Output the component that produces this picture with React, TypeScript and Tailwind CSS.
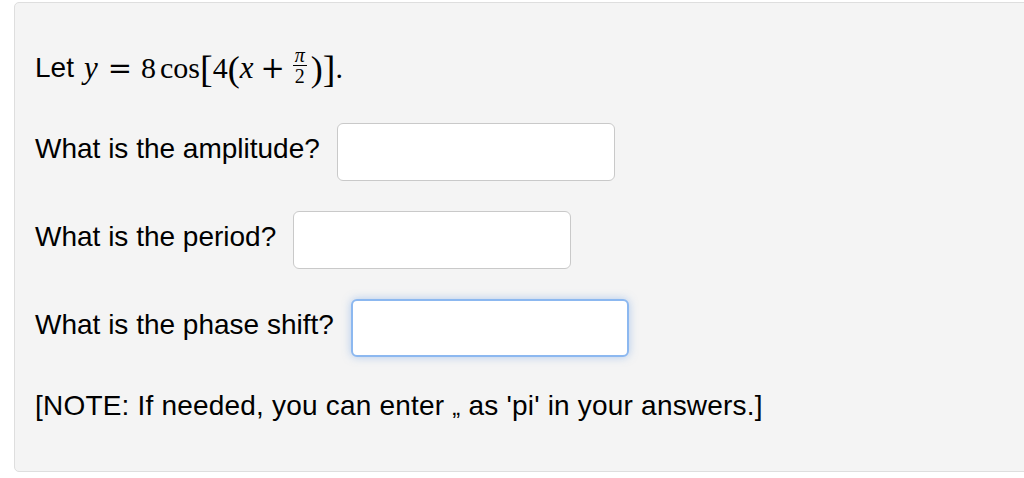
const sans = { fontFamily: '"Liberation Sans", Arial, sans-serif' };

const Field = ({ focused = false }: { focused?: boolean }) => (
  <input
    type="text"
    className={
      focused
        ? "w-[278px] h-[58px] bg-white rounded-[6px] border-2 border-[#8cb8f0] shadow-[0_0_8px_rgba(110,160,230,0.5)] outline-none"
        : "w-[278px] h-[58px] bg-white rounded-[6px] border border-[#c9c9c9] outline-none"
    }
  />
);

const Question = ({ label, focused }: { label: string; focused?: boolean }) => (
  <div className="flex items-center gap-[17px] h-[58px]">
    <span className="text-[28px] leading-[32px] text-black mb-[6px]">{label}</span>
    <Field focused={focused} />
  </div>
);

const MathLine = () => (
  <span
    className="inline-flex items-baseline text-[30px] leading-[32px] text-black"
    style={{ fontFamily: '"Liberation Serif", "Times New Roman", serif' }}
  >
    <span className="italic ml-[10px] text-[31px]">y</span>
    <span className="ml-[10px] mr-[9px] text-[29px]" style={{ fontFamily: '"DejaVu Serif", serif' }}>=</span>
    <span>8</span>
    <span className="ml-[4px]">cos</span>
    <span className="text-[38px] leading-[32px] relative top-[4px]">[</span>
    <span>4</span>
    <span className="text-[36px] leading-[32px] relative top-[3px]">(</span>
    <span className="italic text-[31px]">x</span>
    <span className="ml-[7px] mr-[8px] text-[29px]" style={{ fontFamily: '"DejaVu Serif", serif' }}>+</span>
    <span className="inline-flex flex-col items-center text-[20px] relative top-[-2px] self-center">
      <span className="italic leading-[17px] border-b border-black px-[2px] pb-[1px]">π</span>
      <span className="leading-[17px] pt-[2px]">2</span>
    </span>
    <span className="ml-[4px] text-[36px] leading-[32px] relative top-[3px]">)</span>
    <span className="text-[38px] leading-[32px] relative top-[4px]">]</span>
    <span>.</span>
  </span>
);

export default function App() {
  return (
    <div className="w-[1024px] h-[478px] overflow-hidden bg-white" style={sans}>
      <div className="ml-[14px] mt-[2px] w-[1030px] h-[470px] bg-[#f4f4f4] border border-[#dedede] rounded-[5px] pl-[20px] pt-[45px]">
        <div className="flex items-center h-[40px] text-black">
          <span className="text-[28px] leading-[32px]">Let</span>
          <MathLine />
        </div>
        <div className="mt-[35px] flex flex-col gap-[30px]">
          <Question label="What is the amplitude?" />
          <Question label="What is the period?" />
          <Question label="What is the phase shift?" focused />
        </div>
        <p className="mt-[33px] text-[28px] leading-[32px] text-black tracking-[0.2px]">
          [NOTE: If needed, you can enter <span className="text-[24px]">„</span> as 'pi' in your answers.]
        </p>
      </div>
    </div>
  );
}
